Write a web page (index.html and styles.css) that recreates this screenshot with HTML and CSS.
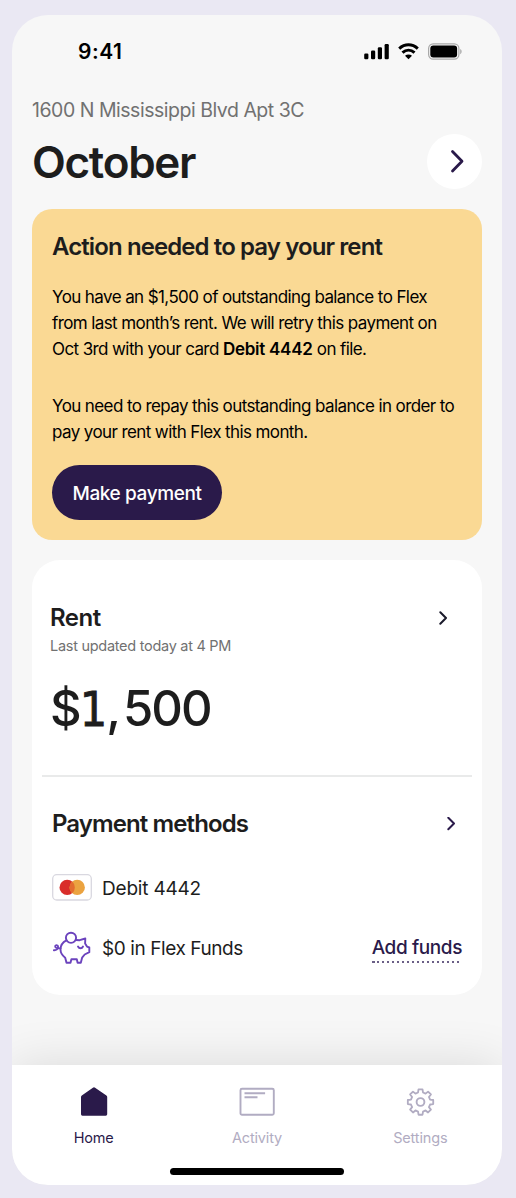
FILE: index.html
```html
<!DOCTYPE html>
<html lang="en">
<head>
  <meta charset="UTF-8" />
  <meta name="viewport" content="width=device-width, initial-scale=1.0" />
  <title>Flex - Home</title>
  <link rel="stylesheet" href="styles.css">
</head>
<body>
  <div class="phone">
    <div class="status-bar">
      <span class="time">9:41</span>
      <div class="status-icons">
        <svg width="26" height="17" viewBox="0 0 26 17">
          <rect x="0.2" y="10.5" width="4.2" height="5.7" rx="1.2" />
          <rect x="7" y="7.6" width="4.2" height="8.6" rx="1.2" />
          <rect x="13.8" y="4.3" width="4.2" height="11.9" rx="1.2" />
          <rect x="20.6" y="1" width="4.2" height="15.2" rx="1.2" />
        </svg>
        <svg class="wifi" width="22" height="17" viewBox="0 0 22 17">
          <path d="M1.2 5.6C6.8 .6 14.2 .6 19.8 5.6M4.5 9.7C8.2 6.3 12.8 6.3 16.5 9.7" fill="none" stroke="#000" stroke-width="3" />
          <path d="M10.5 16.3L7 12.8C9 11 12 11 14 12.8Z" />
        </svg>
        <svg width="34" height="17" viewBox="0 0 34 17">
          <rect x="0.6" y="0.8" width="30.3" height="15.4" rx="4.6" fill="none" stroke="#a9a9a9" stroke-width="1.2" />
          <rect x="2.3" y="2.6" width="26.8" height="11.8" rx="3" />
          <path d="M32.2 6v5.2c1.9-.9 1.9-4.3 0-5.2z" fill="#a9a9a9" />
        </svg>
      </div>
    </div>

    <div class="content">
      <p class="address">1600 N Mississippi Blvd Apt 3C</p>
      <div class="month-row">
        <h1>October</h1>
        <button class="next-btn" aria-label="Next">
          <svg width="14" height="24" viewBox="0 0 14 24"><path d="M2.5 2.5l9.5 9.7-9.5 9.7" /></svg>
        </button>
      </div>

      <div class="alert">
        <h2>Action needed to pay your rent</h2>
        <p class="line-1">You have an $1,500 of outstanding balance to Flex<br>from last month’s rent. We will retry this payment on<br>Oct 3rd with your card <b>Debit 4442</b> on file.</p>
        <p>You need to repay this outstanding balance in order to<br>pay your rent with Flex this month.</p>
        <button class="pay-btn">Make payment</button>
      </div>

      <div class="card">
        <div class="rent">
          <div class="card-head">
            <h2 class="rent-title">Rent</h2>
            <svg class="chevron" width="9" height="14" viewBox="0 0 9 14"><path d="M1.3 1.3L7 7l-5.7 5.7" /></svg>
          </div>
          <p class="updated">Last updated today at 4 PM</p>
          <p class="amount">$<span class="one">1</span><span class="comma">,</span>500</p>
        </div>
        <div class="methods">
          <div class="card-head">
            <h2>Payment methods</h2>
            <svg class="chevron purple" width="9" height="14" viewBox="0 0 9 14"><path d="M1.3 .8L7 6.5l-5.7 5.7" /></svg>
          </div>
          <div class="method">
            <svg width="40" height="27" viewBox="0 0 40 27">
              <rect x="0.7" y="0.7" width="38.6" height="25.3" rx="4" fill="#fff" stroke="#d9d8e0" stroke-width="1.3" />
              <circle cx="15.2" cy="13.4" r="7.7" fill="#d92d2a" />
              <circle cx="25.2" cy="13.4" r="7.7" fill="#eba340" />
              <path d="M20.2 7.6a7.7 7.7 0 0 1 0 11.6a7.7 7.7 0 0 1 0-11.6z" fill="#e36c2f" />
            </svg>
            <span class="debit">Debit 4442</span>
          </div>
          <div class="method funds">
            <svg class="piggy" width="40" height="36" viewBox="-1 0 40 36">
              <circle cx="18" cy="7.8" r="5.1" />
              <path d="M13.4 10.3C10 12 7.5 15.2 7.5 19.5c0 3.7 2.2 6.3 4.7 8.2l1.3 5h4l.9-3.5h5.4l.8 3.5h3.2l1.3-5 2.6-3.2 4.6-2.3v-4.7l-2.3-.9-1.9-3 .2-5.1-5.6 1.7-3.7-.2" />
              <path d="M25 16.5c1.2 2.3 3.9 2.3 5 0" />
              <path d="M7.5 18.2c-2.5.5-5.3-.2-5.3-1.8 0-1.7 2.9-1.7 2.9.3 0 2.2-1.7 3.8-4.2 3.6" />
            </svg>
            <span class="balance">$0 in Flex Funds</span>
            <a class="add-funds" href="#">Add funds</a>
          </div>
        </div>
      </div>
    </div>

    <nav class="tab-bar">
      <div class="tabs">
        <a class="tab active" href="#">
          <svg width="36" height="32" viewBox="0 0 36 32"><path d="M5 11Q5 10.2 5.8 9.6L16.9 1.7Q18 .9 19.1 1.7L30.4 9.6Q31.200 10.200 31.200 11V28.300q0 1.400-1.400 1.400H6.400q-1.400 0-1.400-1.400z" /></svg>
          <span>Home</span>
        </a>
        <a class="tab" href="#">
          <svg class="outline" width="36" height="32" viewBox="0 0 36 32"><rect x="1.5" y="2.8" width="33.3" height="26" rx="1.5" /><path d="M5.500 7.300h20.600M5.500 11.300h13" /></svg>
          <span>Activity</span>
        </a>
        <a class="tab" href="#">
          <svg class="outline" width="30" height="32" viewBox="-0.5 -1 30 32"><path d="M12.9 1.7H17.1L17.6 5 20.3 6.2 22.9 4.1 25.9 7.1 23.8 9.7 25 12.4 28.3 12.9V17.1L25 17.6 23.8 20.3 25.9 22.9 22.9 25.9 20.3 23.8 17.6 25 17.1 28.3H12.9L12.4 25 9.7 23.8 7.1 25.9 4.1 22.9 6.2 20.3 5 17.6 1.7 17.1V12.9L5 12.4 6.2 9.7 4.1 7.1 7.1 4.1 9.7 6.2 12.4 5Z" transform="translate(.7 .7) scale(.955)" /><circle cx="15" cy="15" r="3.9" /></svg>
          <span>Settings</span>
        </a>
      </div>
      <div class="home-indicator"></div>
    </nav>
  </div>
</body>
</html>
```

FILE: styles.css
```css
* {
  box-sizing: border-box;
}

body {
  margin: 0;
  padding: 14.5px 14px 13.5px 12px;
  background: #eae8f3;
  font-family: Inter, "Liberation Sans", sans-serif;
  color: #1d1d1d;
  white-space: nowrap;
}

h1, h2, p {
  margin: 0;
}

h2 {
  font-size: 24px;
  font-weight: 600;
  line-height: 30px;
  letter-spacing: -0.9px;
}

button {
  border: none;
  padding: 0;
  font-family: inherit;
}

.phone {
  display: flex;
  flex-direction: column;
  height: 1170px;
  border-radius: 36px;
  background: #f7f7f7;
  overflow: hidden;
}

.status-bar {
  display: flex;
  justify-content: space-between;
  align-items: center;
  height: 73px;
  padding: 0 40px 0 66px;
}

.time {
  font-size: 21px;
  font-weight: 600;
  letter-spacing: 0.5px;
  color: #000;
}

.status-icons {
  display: flex;
  gap: 8px;
}

.content {
  flex: 1;
  padding: 0 20px;
}

.address {
  margin-top: 8px;
  font-size: 19.5px;
  line-height: 28px;
  letter-spacing: -0.48px;
  color: #717171;
}

.month-row {
  display: flex;
  justify-content: space-between;
  align-items: center;
  height: 55px;
  margin-top: 10px;
}

h1 {
  padding-top: 1px;
  font-size: 44px;
  font-weight: 600;
  letter-spacing: -1.3px;
}

.next-btn {
  width: 55px;
  height: 55px;
  border-radius: 50%;
  background: #fff;
}

.next-btn svg {
  display: block;
  margin-left: 23px;
  fill: none;
  stroke: #2a1a4a;
  stroke-width: 2.8;
  stroke-linecap: round;
  stroke-linejoin: round;
}

.alert {
  height: 331px;
  margin-top: 20px;
  padding: 23px 20px 20px;
  border-radius: 20px;
  background: #fad994;
}

.alert p {
  font-size: 17px;
  line-height: 26px;
  letter-spacing: -0.6px;
  color: #000;
}

.alert b {
  font-weight: 600;
  letter-spacing: -0.25px;
}

.alert .line-1 {
  margin: 22px 0 31px;
}

.pay-btn {
  width: 170px;
  height: 55px;
  margin-top: 20.5px;
  padding-top: 2px;
  border-radius: 28px;
  background: #2a1a4a;
  color: #fff;
  font-size: 19px;
  font-weight: 500;
  letter-spacing: -0.4px;
}

.card {
  height: 435px;
  margin-top: 20px;
  padding: 0 10px;
  border-radius: 28px;
  background: #fff;
}

.card-head {
  display: flex;
  justify-content: space-between;
  align-items: center;
}

.rent-title {
  letter-spacing: -0.5px;
}

.chevron {
  fill: none;
  stroke: #1a1a2b;
  stroke-width: 2;
  stroke-linecap: round;
  stroke-linejoin: round;
}

.chevron.purple {
  stroke: #2a1a4a;
}

.rent {
  height: 217px;
  padding: 43px 24px 0 8px;
  border-bottom: 2px solid #e9eaea;
}

.updated {
  margin-top: 3px;
  font-size: 14.5px;
  line-height: 20px;
  letter-spacing: -0.28px;
  color: #717171;
}

.amount {
  margin-top: 23px;
  font-size: 49px;
  font-weight: 500;
  line-height: 60px;
  letter-spacing: -2px;
}

/* flat-footed 1, as in the tabular figures */
.one {
  font-family: "DejaVu Sans Condensed", "DejaVu Sans", sans-serif;
  font-stretch: condensed;
  font-size: 48px;
  font-weight: 400;
  line-height: 1;
  letter-spacing: -1px;
  -webkit-text-stroke: 0.8px #1d1d1d;
}

.comma {
  letter-spacing: 2px;
}

.methods {
  padding: 32px 10px 0;
}

.methods .card-head {
  padding-right: 6px;
}

.method {
  display: flex;
  align-items: center;
  gap: 10px;
  height: 36px;
  margin-top: 31px;
  font-size: 19px;
}

.method.funds {
  margin-top: 24px;
}

.debit {
  padding-top: 2px;
  letter-spacing: -0.2px;
}

.balance {
  padding-top: 2px;
  letter-spacing: -0.42px;
}

.piggy {
  fill: none;
  stroke: #6b43bd;
  stroke-width: 1.9;
  stroke-linecap: round;
  stroke-linejoin: round;
}

.add-funds {
  margin-left: auto;
  padding: 4px 0;
  background: repeating-linear-gradient(90deg, #6a5e86 0 2.5px, transparent 2.5px 5px) left bottom / 100% 2px no-repeat;
  color: #2a1a4a;
  font-weight: 500;
  letter-spacing: -0.4px;
  text-decoration: none;
}

.tab-bar {
  height: 119.5px;
  background: #fff;
  box-shadow: 0 0 50px rgba(0, 0, 0, 0.12);
}

.tabs {
  display: grid;
  grid-template-columns: repeat(3, 1fr);
  padding-top: 21px;
}

.tab {
  display: flex;
  flex-direction: column;
  align-items: center;
  gap: 10px;
  color: #b1acc2;
  font-size: 14.5px;
  line-height: 20px;
  letter-spacing: -0.15px;
  text-decoration: none;
}

.tab.active {
  color: #2a1a4a;
  fill: #2a1a4a;
}

.outline {
  fill: none;
  stroke: #b1acc2;
  stroke-width: 1.9;
  stroke-linejoin: round;
}

.home-indicator {
  width: 174px;
  height: 6.5px;
  margin: 20px auto 0;
  border-radius: 4px;
  background: #000;
}
```
